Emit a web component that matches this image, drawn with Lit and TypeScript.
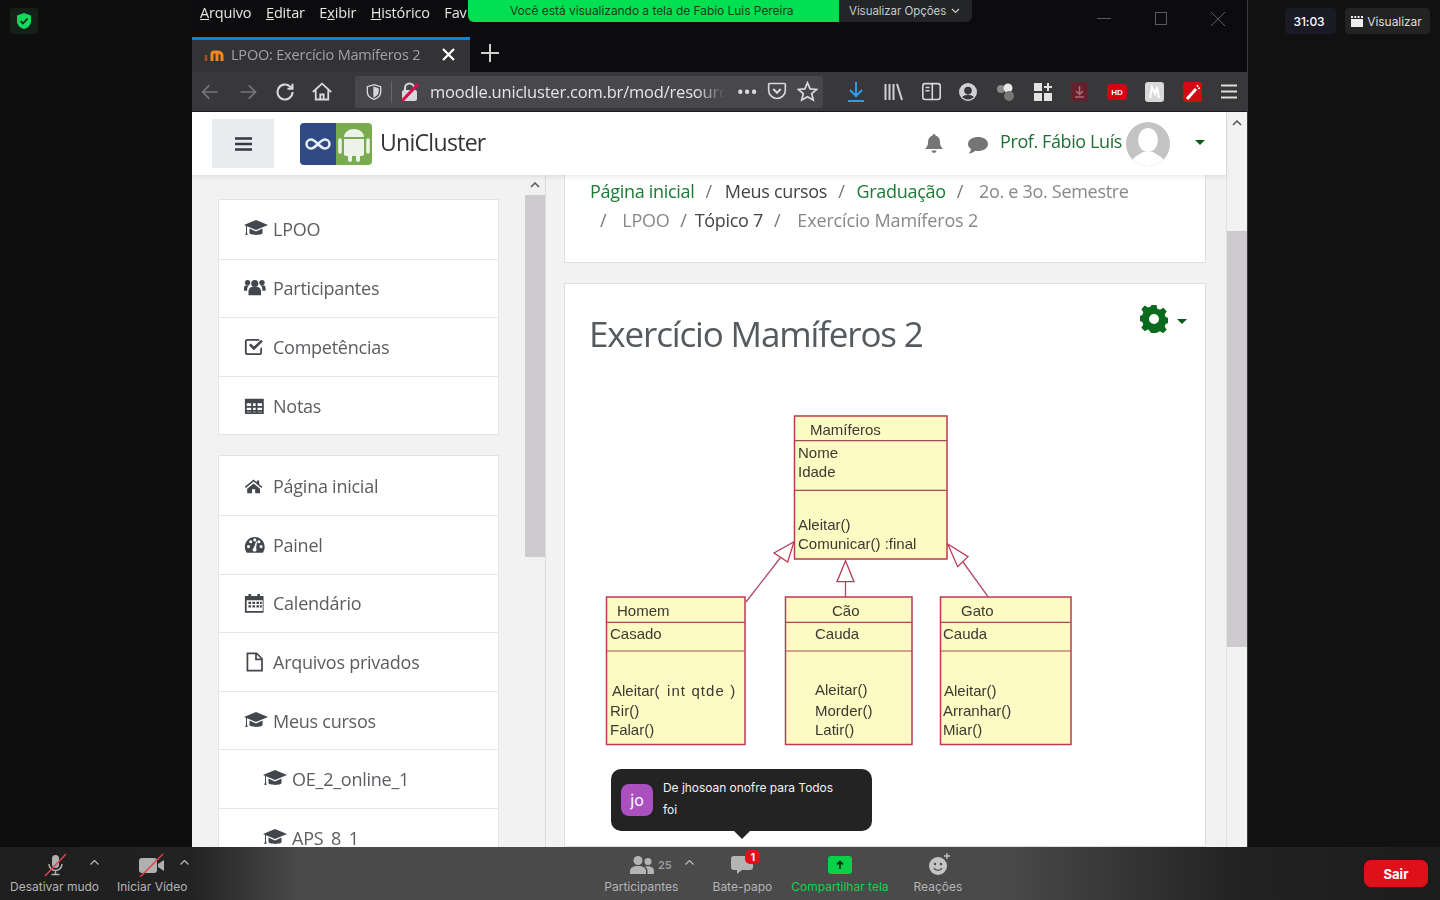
import { LitElement, html, css, svg } from "lit";
import { customElement } from "lit/decorators.js";

const cap = svg`<path d="M12 3 24 8 12 13 0 8Z"/><path d="M5.500 11.500 12 14.500l6.500-3V16c0 2.500-13 2.500-13 0Z"/><path d="M2 9h1v6l.6 3H1.400L2 15Z"/>`;
const users = svg`<circle cx="12" cy="7" r="4"/><circle cx="4" cy="6" r="3"/><circle cx="20" cy="6" r="3"/><path d="M5 20v-4c0-3 2-5 4-5h6c2 0 4 2 4 5v4Z"/><path d="M0 15v-3c0-2 1-3 3-3h3c-2 1-2.500 3-2.500 6ZM24 15v-3c0-2-1-3-3-3h-3c2 1 2.500 3 2.500 6Z"/>`;
const check = svg`<path fill-rule="evenodd" d="M4 3h13v2H4a1 1 0 0 0-1 1v12a1 1 0 0 0 1 1h13a1 1 0 0 0 1-1v-4l2-2v6a3 3 0 0 1-3 3H4a3 3 0 0 1-3-3V6a3 3 0 0 1 3-3Z"/><path d="m5.500 10 2-2 3.500 3.500L19 4l2 2-10 9.500Z"/>`;
const table = svg`<path fill-rule="evenodd" d="M1 4h21v17H1Zm2 5v3h5V9Zm7 0v3h3V9Zm5 0v3h5V9ZM3 14v2.500h5V14Zm7 0v2.500h3V14Zm5 0v2.500h5V14ZM3 18.500V19h5v-.5Zm7 0V19h3v-.5Zm5 0V19h5v-.5Z"/>`;
const home = svg`<path d="M12 4 1 13l1.200 1.500L12 6.500l9.800 8L23 13l-4-3.300V5h-3v2.200Z"/><path d="M4 15.500 12 9l8 6.500V21h-6v-5h-4v5H4Z"/>`;
const gauge = svg`<path fill-rule="evenodd" d="M12 3C5.500 3 1 8 1 14c0 2.500.7 4.800 2 6.500h18c1.300-1.700 2-4 2-6.500 0-6-4.500-11-11-11ZM5 15.500a1.700 1.700 0 1 1 0-3.400 1.700 1.700 0 0 1 0 3.400Zm2.500-5.500a1.700 1.700 0 1 1 0-3.400 1.700 1.700 0 0 1 0 3.400ZM12 8a1.700 1.700 0 1 1 0-3.400A1.700 1.700 0 0 1 12 8Zm2 9a2.200 2.200 0 1 1-3.200-1.800L13.500 8l1 .3-1 7Zm5-1.500a1.700 1.700 0 1 1 0-3.400 1.700 1.700 0 0 1 0 3.400Zm-2.500-5.500a1.700 1.700 0 1 1 0-3.400 1.700 1.700 0 0 1 0 3.400Z"/>`;
const cal = svg`<path fill-rule="evenodd" d="M5 2h3v2h7V2h3v2h4v19H1V4h4ZM3 9v12h18V9Zm2 1.500h3v2.500H5Zm4.500 0h3v2.500h-3Zm4.500 0h3v2.500h-3Zm4 0h2v2.500h-2ZM5 14.500h3V17H5Zm4.500 0h3V17h-3Zm4.500 0h3V17h-3Zm4 0h2V17h-2Z"/>`;
const file = svg`<path fill-rule="evenodd" d="M3 1h12l7 7v15H3Zm2 2v18h15V10h-7V3Zm10 .500V8h4.500Z"/>`;

const nav1: [unknown, string, number][] = [[cap, "LPOO", 24], [users, "Participantes", 26.7], [check, "Competências", 26.7], [table, "Notas", 26.7]];
const nav2: [unknown, string, number, boolean?][] = [
  [home, "Página inicial", 30], [gauge, "Painel", 26.7], [cal, "Calendário", 27], [file, "Arquivos privados", 28],
  [cap, "Meus cursos", 24], [cap, "OE_2_online_1", 24, true], [cap, "APS_8_1", 24, true],
];

const uk = (s: string) => html`<u>${s}</u>`;

@customElement("app-root")
export class AppRoot extends LitElement {
  static styles = css`
    :host { display: block; width: 1440px; height: 900px; overflow: hidden; background: #0e0e0e; position: relative; font-family: "Open Sans", sans-serif; color: #444; }
    svg { display: block; flex: none; }
    .stage { display: flex; height: 847px; }
    .side-l { width: 192px; flex: none; background: #0e0e0e; padding: 8px 0 0 10px; box-sizing: border-box; }
    .shield-box { width: 28px; height: 26px; background: #172018; border-radius: 4px; display: flex; align-items: center; justify-content: center; }
    .side-r { flex: 1; background: #111; display: flex; justify-content: flex-end; gap: 9px; padding: 8px 10px 0 0; font-family: "Inter", sans-serif; color: #fff; font-size: 12px; letter-spacing: -.05px; }
    .chip { height: 26px; border-radius: 4px; display: flex; align-items: center; justify-content: center; box-sizing: border-box; }
    .timer { width: 51px; background: #1a1a27; font-weight: 500; padding-right: 3px; }
    .view { width: 85px; background: #232323; gap: 4px; color: #ddd; padding-right: 2px; }

    .browser { width: 1056px; flex: none; display: flex; flex-direction: column; border-right: 1px solid #3a3a3a; box-sizing: border-box; height: 847px; overflow: hidden; filter: blur(.35px); }
    .titlebar { height: 37px; background: #0c0b0e; display: flex; align-items: flex-start; padding: 3px 22px 0 8px; box-sizing: border-box; color: #e6e6e6; font-size: 14.500px; letter-spacing: -.15px; }
    .menu { display: flex; gap: 14.500px; width: 268px; overflow: hidden; white-space: nowrap; line-height: 20px; flex: none; }
    .winbtns { margin-left: auto; display: flex; gap: 43px; color: #5a5a5e; padding-top: 9px; }
    .tabs { height: 35px; background: #0c0b0e; display: flex; align-items: stretch; }
    .tab { width: 278px; background: #333336; border-top: 3px solid #0a84d8; box-sizing: border-box; display: flex; align-items: center; padding: 0 15px 4px 12px; color: #a2a2a4; font-size: 14.500px; white-space: nowrap; letter-spacing: -.2px; }
    .tab span { margin-left: 7px; flex: 1; }
    .newtab { margin: -4px 0 0 11px; align-self: center; }
    .navbar { height: 40px; background: #38383b; display: flex; align-items: center; border-bottom: 1px solid #1c1c1e; box-sizing: border-box; padding-left: 9px; color: #d8d8da; }
    .nv { display: flex; gap: 17px; align-items: center; }
    .urlbar { margin-left: 23px; width: 468px; height: 32px; background: #48484c; border-radius: 3px; display: flex; align-items: center; padding: 0 5px 0 11px; box-sizing: border-box; flex: none; }
    .sep { width: 1px; height: 22px; background: #66666a; margin: 0 9px; }
    .url { margin-left: 11px; width: 297px; overflow: hidden; white-space: nowrap; color: #e4e4e6; font-size: 16.500px; letter-spacing: -.2px; -webkit-mask-image: linear-gradient(90deg,#000 90%,transparent); mask-image: linear-gradient(90deg,#000 90%,transparent); }
    .dots { margin-left: 11px; font-size: 15px; letter-spacing: 1.200px; font-weight: 700; line-height: 1; }
    .urlicons { display: flex; gap: 10px; margin-left: 9px; }
    .tools { display: flex; align-items: center; gap: 18.800px; margin-left: 24px; }

    .page { flex: 1; display: flex; min-height: 0; }
    .pagemain { flex: 1; min-width: 0; display: flex; flex-direction: column; position: relative; background: #f2f2f2; }
    .pagebar { width: 21px; flex: none; background: #f2f2f3; display: flex; flex-direction: column; align-items: center; border-left: 1px solid #e2e2e2; box-sizing: border-box; }
    .up { height: 20px; display: flex; align-items: center; justify-content: center; flex: none; width: 100%; }
    .pagebar .up { height: 22px; }
    .thumb { background: #cdcbce; width: 100%; }
    .pt { height: 97px; flex: none; }
    .pth { height: 416px; flex: none; }

    header { height: 63px; flex: none; background: #fff; display: flex; align-items: center; padding: 0 21px 0 20px; box-shadow: 0 2px 4px rgba(0,0,0,.08); position: relative; z-index: 1; }
    .burger { width: 62px; height: 49px; background: #e9ecef; display: flex; align-items: center; justify-content: center; flex: none; }
    .logo { margin-left: 26px; flex: none; }
    .brand { margin: -4px 0 0 8px; font-size: 23px; letter-spacing: -.7px; color: #333; }
    .hright { margin-left: auto; display: flex; align-items: center; color: #757575; }
    .uname { font-size: 18px; letter-spacing: -.4px; color: #1f6f35; margin: -5px 0 0 12px; }
    .avatar { margin-left: 4px; }
    .caret { width: 0; height: 0; border: 5px solid transparent; border-top-color: #0b5c18; border-bottom: 0; }
    .hright .caret { margin-left: 25px; margin-top: -3px; }
    .bell { margin-top: -1px; }
    .bubble { margin: 2px 0 0 24px; }

    .columns { flex: 1; display: flex; min-height: 0; }
    .sidebar { width: 354px; flex: none; display: flex; border-right: 1px solid #dcdcdc; box-sizing: border-box; }
    .navcol { flex: 1; padding: 24px 26px 0; display: flex; flex-direction: column; gap: 20px; overflow: hidden; }
    .sbar { width: 20px; flex: none; background: #f1f1f2; display: flex; flex-direction: column; }
    .sthumb { height: 362px; flex: none; background: #cdcbce; }
    .navcard { background: #fff; border: 1px solid #e4e4e4; flex: none; }
    .row { height: 58.600px; box-sizing: border-box; display: flex; align-items: center; padding-left: 25px; font-size: 18px; letter-spacing: -.25px; color: #5b5d60; border-top: 1px solid #e6e6e6; gap: 5px; }
    .row:first-child { border-top: 0; }
    .row.sub { padding-left: 44px; }
    .row svg { color: #43464c; }

    .content { flex: 1; padding: 0 20px 0 18px; display: flex; flex-direction: column; gap: 20px; overflow: hidden; min-width: 0; }
    .crumbcard { background: #fff; border: 1px solid #dfdfdf; border-top: 0; height: 88px; box-sizing: border-box; flex: none; padding: 2px 0 0 25px; }
    .crumbs { display: flex; flex-wrap: wrap; font-size: 18px; letter-spacing: -.3px; line-height: 29px; color: #888; width: 560px; }
    .crumbs b { font-weight: 400; color: #1b7a33; }
    .crumbs i { font-style: normal; color: #444; }
    .crumbs s { text-decoration: none; margin: 0 11px; color: #777; }
    .crumbs .lead { margin-left: 10px; }
    .crumbs .m1 { margin-left: 1px; }
    .crumbs .m2 { margin-left: 2px; }
    .crumbs .m5 { margin-left: 5px; }
    .crumbs .wide { margin-left: 6px; letter-spacing: -.15px; }
    .crumbs .lp { margin-left: 5px; }
    .crumbs .tp { margin-left: -3px; }
    .card { background: #fff; border: 1px solid #dfdfdf; flex: 1; box-sizing: border-box; padding: 0 18px 0 25px; }
    .cardhead { display: flex; align-items: flex-start; height: 126px; }
    h1 { font-weight: 400; font-size: 35px; letter-spacing: -1.150px; line-height: 48px; margin: 26px 0 0 -1px; color: #555a5e; flex: 1; }
    .gear { display: flex; align-items: center; gap: 9px; margin: 21px 0 0; color: #0a6b1e; }
    .gear .caret { margin-top: 5px; }
    .uml { margin-left: 10px; }
    .uml text { font-family: "Liberation Sans", sans-serif; font-size: 15px; fill: #3a3a32; }
    .uml .wide { letter-spacing: 1.100px; }

    .toolbar { height: 53px; display: flex; background: linear-gradient(90deg,#1e1e1e 0,#222 190px,#4a4a4a 300px,#4a4a4a 1000px,#222 1240px,#1c1c1c 100%); font-family: "Inter", sans-serif; font-size: 12px; color: #b4b4b4; padding: 0 12px 0 10px; align-items: stretch; white-space: nowrap; }
    .tbgroup { display: flex; }
    .tbitem { display: flex; flex-direction: column; align-items: center; position: relative; padding-top: 4px; box-sizing: border-box; }
    .tbicon { height: 28px; display: flex; align-items: center; justify-content: center; gap: 4px; color: #b9b9b9; }
    .count { font-size: 11px; font-weight: 600; color: #9e9e9e; }
    .arrow { position: absolute; top: 13px; color: #bbb; }
    .left { gap: 18px; }
    .center { margin-left: 417px; }
    .green { color: #12d24d; }
    .badge { position: absolute; top: 3px; left: 33px; width: 15px; height: 14px; background: #e3101a; border-radius: 5px; color: #fff; font-size: 10px; font-weight: 700; display: flex; align-items: center; justify-content: center; line-height: 1; }
    .share { width: 24px; height: 18px; background: #0ad04a; border-radius: 3px; display: flex; align-items: center; justify-content: center; color: #0b3d1a; }
    .sair { margin: 13px 0 13px auto; width: 64px; background: #e0101b; color: #fff; border-radius: 7px; font-weight: 700; font-size: 13px; display: flex; align-items: center; justify-content: center; }

    .banner { position: absolute; left: 468px; top: 0; width: 504px; height: 22px; display: flex; border-radius: 0 0 6px 6px; overflow: hidden; font-family: "Inter", sans-serif; font-size: 12px; line-height: 21px; z-index: 3; }
    .b1 { width: 371px; background: #00e050; color: #1e3a1e; padding-left: 42px; box-sizing: border-box; white-space: nowrap; letter-spacing: -.05px; }
    .b2 { flex: 1; background: #242526; color: #c9c9c9; padding-left: 10px; display: flex; align-items: center; gap: 5px; font-size: 11.500px; letter-spacing: -.05px; }

    .toast { position: absolute; left: 611px; top: 769px; width: 261px; height: 62px; background: #232323; border-radius: 10px; display: flex; align-items: center; padding-left: 10px; box-sizing: border-box; color: #f2f2f2; font-family: "Inter", sans-serif; font-size: 12px; z-index: 3; }
    .toast::after { content: ""; position: absolute; left: 123px; bottom: -8px; border: 8px solid transparent; border-top-color: #232323; border-bottom: 0; }
    .jo { width: 32px; height: 32px; background: #ab50bf; border-radius: 8px; color: #fff; font-size: 16px; display: flex; align-items: center; justify-content: center; flex: none; }
    .msg { margin: -2px 0 0 10px; line-height: 22px; letter-spacing: -.05px; }
  `;

  private row(icon: unknown, label: string, vb: number, sub = false) {
    return html`<div class="row ${sub ? "sub" : ""}"><svg width="24" height="24" viewBox="0 ${(24 - vb) / 2} ${vb} ${vb}" fill="currentColor">${icon}</svg><span>${label}</span></div>`;
  }

  private box(x: number, w: number, y: number, h: number, d1: number, d2: number) {
    return svg`<rect x=${x} y=${y} width=${w} height=${h} fill="#fdfac4" stroke="#bb3a55" stroke-width="1.500"/><path d="M${x} ${d1}H${x + w}M${x} ${d2}H${x + w}" stroke="#a84a55" stroke-width="1.200"/>`;
  }
  private t(x: number, y: number, s: string) { return svg`<text x=${x} y=${y}>${s}</text>`; }

  render() {
    const ic = (w: number, h: number, body: unknown, vb = "0 0 24 24") => html`<svg width=${w} height=${h} viewBox=${vb} fill="none" stroke="currentColor" stroke-width="2">${body}</svg>`;
    return html`
      <div class="stage">
        <div class="side-l"><div class="shield-box"><svg width="14" height="16" viewBox="0 0 14 16"><path d="M7 0 14 2.500V8c0 4-3 7-7 8-4-1-7-4-7-8V2.500Z" fill="#15d95c"/><path d="m3.500 8 2.500 2.500 4.500-5" fill="none" stroke="#0c2a16" stroke-width="1.800"/></svg></div></div>

        <div class="browser">
          <div class="titlebar">
            <div class="menu"><span>${uk("A")}rquivo</span><span>${uk("E")}ditar</span><span>E${uk("x")}ibir</span><span>${uk("H")}istórico</span><span>Fav</span></div>
            <div class="winbtns">
              <svg width="14" height="14" viewBox="0 0 14 14"><path d="M0 6.500h14" stroke="currentColor"/></svg>
              <svg width="14" height="14" viewBox="0 0 14 14"><rect x="1.500" y=".5" width="11" height="12" fill="none" stroke="currentColor"/></svg>
              <svg width="14" height="14" viewBox="0 0 14 14"><path d="M0 0l14 14M14 0 0 14" stroke="currentColor"/></svg>
            </div>
          </div>
          <div class="tabs">
            <div class="tab">
              <svg width="20" height="13" viewBox="0 0 20 13" fill="none"><path d="M2 13V7" stroke="#a0531c" stroke-width="2.500"/><path d="M8 13V6q0-2 2-2h3q5 0 5 4v5M13 5v8" stroke="#f08a1e" stroke-width="3"/></svg>
              <span>LPOO: Exercício Mamíferos 2</span>
              <svg width="13" height="13" viewBox="0 0 13 13"><path d="M1 1l11 11M12 1 1 12" stroke="#fff" stroke-width="2.200"/></svg>
            </div>
            <svg class="newtab" width="18" height="18" viewBox="0 0 18 18"><path d="M9 0v18M0 9h18" stroke="#d0d0d0" stroke-width="2"/></svg>
          </div>
          <div class="navbar">
            <div class="nv">
              ${ic(20, 20, svg`<path d="M20 12H3M10 4l-8 8 8 8" stroke="#77777b"/>`)}
              ${ic(20, 20, svg`<path d="M3 12h17M13 4l8 8-8 8" stroke="#77777b"/>`)}
              ${ic(20, 20, svg`<path d="M21 12a9 9 0 1 1-3-6.700L21 8M21 2v6h-6" stroke-width="2.500"/>`)}
              ${ic(20, 20, svg`<path d="M1 12 12 2l11 10M4.500 10v11h15V10M10 21v-6h4v6" stroke-width="2.200"/>`)}
            </div>
            <div class="urlbar">
              ${ic(16, 18, svg`<path d="M12 1 22 4v8c0 5-4 9-10 11C6 21 2 17 2 12V4Z"/><path d="M12 5 18 7v5c0 3-2 5-6 7Z" fill="currentColor"/>`)}
              <div class="sep"></div>
              <svg width="18" height="20" viewBox="0 0 18 20"><rect x="1" y="8" width="15" height="11" rx="2" fill="#d8d8da"/><path d="M4 8V6a4.500 4.500 0 0 1 9 0v2" fill="none" stroke="#d8d8da" stroke-width="2"/><path d="M1 19 17 2" stroke="#d70f4c" stroke-width="3"/></svg>
              <div class="url">moodle.unicluster.com.br/mod/resourc</div>
              <div class="dots">•••</div>
              <div class="urlicons">
                ${ic(20, 20, svg`<path d="M3 3h18a1 1 0 0 1 1 1v7c0 6-5 10-10 10S2 17 2 11V4a1 1 0 0 1 1-1Z"/><path d="m7.500 9.500 4.500 4.500 4.500-4.500" stroke-width="2.500"/>`)}
                ${ic(21, 21, svg`<path d="m12 2 3 7 7.500.6-5.700 4.900 1.800 7.300L12 18l-6.600 3.800 1.800-7.300L1.500 9.600 9 9Z"/>`)}
              </div>
            </div>
            <div class="tools">
              <svg width="18" height="22" viewBox="0 0 18 22" fill="none" stroke="#2f9be6" stroke-width="2"><path d="M9 1v14M3 9l6 6 6-6M1 20h16"/></svg>
              <svg width="19" height="18" viewBox="0 0 19 18" fill="none" stroke="#d0d0d2" stroke-width="2"><path d="M1.500 1v16M5.500 1v16M9.500 1v16M13 1l5 16"/></svg>
              ${ic(19, 19, svg`<rect x="1" y="2" width="22" height="20" rx="3"/><path d="M13 2v20M4.500 7h5M4.500 11h5" />`)}
              <svg width="18" height="18" viewBox="0 0 18 18"><circle cx="9" cy="9" r="9" fill="#d0d0d2"/><circle cx="9" cy="7.500" r="3.800" fill="#38383b"/><path d="M3 14q6-5 12 0-6 5-12 0Z" fill="#38383b"/></svg>
              <svg width="19" height="20" viewBox="0 0 19 20"><circle cx="5" cy="7" r="4" fill="#8a8a8a"/><circle cx="12" cy="6" r="4.500" fill="#e8e8e8"/><circle cx="13" cy="14" r="5" fill="#777"/></svg>
              <svg width="18" height="18" viewBox="0 0 18 18" fill="#e2e2e2"><path d="M0 0h8v8H0zM0 10h8v8H0zM10 10h8v8h-8zM13 0h2v3h3v2h-3v3h-2V5h-3V3h3z"/></svg>
              <svg width="17" height="19" viewBox="0 0 17 19"><rect width="17" height="19" rx="2" fill="#64202e"/><path d="M8.500 4v8M5 9l3.500 3.500L12 9M4 15h9" stroke="#b06a70" stroke-width="1.500" fill="none"/></svg>
              <svg width="20" height="16" viewBox="0 0 20 16"><rect width="20" height="16" rx="4" fill="#d40510"/><text x="10" y="11" text-anchor="middle" font-family="Liberation Sans" font-size="8" font-weight="700" fill="#fff">HD</text></svg>
              <svg width="19" height="20" viewBox="0 0 19 20"><rect width="19" height="20" rx="3" fill="#d8d8d8"/><path d="M5 16 7 5l3 7 2-7 2 11" stroke="#fff" stroke-width="2" fill="none"/></svg>
              <svg width="19" height="20" viewBox="0 0 19 20"><rect width="19" height="20" rx="2" fill="#d20a12"/><path d="M4 17 13 7" stroke="#fff" stroke-width="3"/><path d="M14 3l1 2M17 6l-2 .5" stroke="#fff" stroke-width="1.500"/></svg>
              <svg width="16" height="15" viewBox="0 0 16 15"><path d="M0 1.500h16M0 7.500h16M0 13.500h16" stroke="#dcdcdc" stroke-width="2"/></svg>
            </div>
          </div>

          <div class="page">
            <div class="pagemain">
              <header>
                <div class="burger"><svg width="17" height="14" viewBox="0 0 17 14"><path d="M0 1.500h17M0 7h17M0 12.500h17" stroke="#333a42" stroke-width="2.600"/></svg></div>
                <svg class="logo" width="72" height="42" viewBox="0 0 72 42">
                  <path d="M4 0h32v42H4a4 4 0 0 1-4-4V4a4 4 0 0 1 4-4Z" fill="#2f4a85"/>
                  <path d="M36 0h32a4 4 0 0 1 4 4v34a4 4 0 0 1-4 4H36Z" fill="#79ab4f"/>
                  <path d="M18 21c-3-3-4.500-4.500-7-4.500a4.500 4.500 0 0 0 0 9c2.500 0 4-1.500 7-4.500 3-3 4.500-4.500 7-4.500a4.500 4.500 0 0 1 0 9c-2.500 0-4-1.500-7-4.500Z" fill="none" stroke="#e8eef5" stroke-width="2.500"/>
                  <path d="M44 14a10 8 0 0 1 20 0ZM44 16h20v15a2 2 0 0 1-2 2h-2v4a2 2 0 0 1-4 0v-4h-4v4a2 2 0 0 1-4 0v-4h-2a2 2 0 0 1-2-2Z" fill="#eef3ea"/>
                  <path d="M40 17v12M68 17v12" stroke="#eef3ea" stroke-width="3.500" stroke-linecap="round"/>
                </svg>
                <div class="brand">UniCluster</div>
                <div class="hright">
                  <svg class="bell" width="18" height="20" viewBox="0 0 18 20" fill="currentColor"><path d="M9 1a1.500 1.500 0 0 1 1.500 1.500C13.500 3.500 15 6 15 9c0 3.500 1 5 3 7H0c2-2 3-3.500 3-7 0-3 1.500-5.500 4.500-6.500A1.500 1.500 0 0 1 9 1ZM6.500 17.500h5a2.500 2.500 0 0 1-5 0Z"/></svg>
                  <svg class="bubble" width="21" height="18" viewBox="0 0 21 18" fill="currentColor"><path d="M11 1c5 0 10 2.500 10 7s-5 7-10 7c-1 0-2 0-3-.300C6.500 16.500 4 17.500 1.500 17.500c1.500-1.500 2.500-3 2.500-4.500C2 11.800 1 10 1 8c0-4.500 5-7 10-7Z"/></svg>
                  <span class="uname">Prof. Fábio Luís</span>
                  <svg class="avatar" width="44" height="44" viewBox="0 0 44 44"><defs><clipPath id="av"><circle cx="22" cy="22" r="22"/></clipPath></defs><circle cx="22" cy="22" r="22" fill="#c4c4c4"/><g clip-path="url(#av)"><ellipse cx="22" cy="18" rx="10" ry="12" fill="#fff"/><path d="M4 44c1-9 9-11 13-14h10c4 3 12 5 13 14Z" fill="#fff"/></g></svg>
                  <div class="caret"></div>
                </div>
              </header>
              <div class="columns">
                <div class="sidebar">
                  <div class="navcol">
                    <div class="navcard">${nav1.map(([i, l, v]) => this.row(i, l, v))}</div>
                    <div class="navcard">${nav2.map(([i, l, v, s]) => this.row(i, l, v, s))}</div>
                  </div>
                  <div class="sbar">
                    <div class="up"><svg width="10" height="6" viewBox="0 0 10 6"><path d="M1 5l4-4 4 4" fill="none" stroke="#555" stroke-width="1.500"/></svg></div>
                    <div class="sthumb"></div>
                  </div>
                </div>
                <div class="content">
                  <div class="crumbcard">
                    <div class="crumbs">
                      <b>Página inicial</b><s>/</s><i class="m2">Meus cursos</i><s>/</s><b class="m1">Graduação</b><s>/</s><span class="m5">2o. e 3o. Semestre</span>
                      <s class="lead">/</s><span class="lp">LPOO</span><s>/</s><i class="tp">Tópico 7</i><s>/</s><span class="wide">Exercício Mamíferos 2</span>
                    </div>
                  </div>
                  <div class="card">
                    <div class="cardhead">
                      <h1>Exercício Mamíferos 2</h1>
                      <div class="gear">
                        <svg width="28" height="28" viewBox="0 0 28 28"><path fill="currentColor" fill-rule="evenodd" d="M11.500 0h5l.8 3.700 2.700 1.100 3.200-2 3.500 3.500-2 3.200 1.100 2.700 3.700.8v5l-3.700.8-1.100 2.700 2 3.200-3.500 3.500-3.200-2-2.700 1.100-.8 3.700h-5l-.8-3.700L8 24.200l-3.200 2-3.500-3.500 2-3.200-1.100-2.700-3.700-.8v-5l3.700-.8L3.300 7.300l-2-3.200 3.500-3.500L8 2.600l2.700-1.100ZM14 9a5 5 0 1 0 0 10 5 5 0 0 0 0-10Z"/></svg>
                        <div class="caret"></div>
                      </div>
                    </div>
                    <svg class="uml" width="480" height="345" viewBox="600 410 480 345">
                      <g fill="none" stroke="#a84a66" stroke-width="1.300">
                        <path d="M781 557 746 602M845.500 581.700V597M963 562 988 596.700"/>
                        <path d="M794 541.700 774 553 787.700 562ZM845.500 560.700 837 581.700H854ZM947.700 544 968 556.700 957.700 566.700Z" stroke="#bb3a55" fill="#fff"/>
                      </g>
                      ${this.box(794.5, 152.5, 416, 143, 440.7, 490.3)}
                      ${this.box(606.5, 138.5, 597, 147.5, 622.3, 651)}
                      ${this.box(785.5, 126.5, 597, 147.5, 622.3, 651)}
                      ${this.box(940.5, 130.5, 597, 147.5, 622.3, 651)}
                      ${this.t(810, 435, "Mamíferos")}${this.t(798, 458, "Nome")}${this.t(798, 477, "Idade")}${this.t(798, 530, "Aleitar()")}${this.t(798, 549, "Comunicar() :final")}
                      ${this.t(617, 616, "Homem")}${this.t(610, 639, "Casado")}${this.t(612, 696, "Aleitar(")}<text class="wide" x="667" y="696">int qtde )</text>${this.t(610, 716, "Rir()")}${this.t(610, 735, "Falar()")}
                      ${this.t(832, 616, "Cão")}${this.t(815, 639, "Cauda")}${this.t(815, 695, "Aleitar()")}${this.t(815, 716, "Morder()")}${this.t(815, 735, "Latir()")}
                      ${this.t(961, 616, "Gato")}${this.t(943, 639, "Cauda")}${this.t(944, 696, "Aleitar()")}${this.t(943, 716, "Arranhar()")}${this.t(943, 735, "Miar()")}
                    </svg>
                  </div>
                </div>
              </div>
            </div>
            <div class="pagebar">
              <div class="up"><svg width="10" height="6" viewBox="0 0 10 6"><path d="M1 5l4-4 4 4" fill="none" stroke="#555" stroke-width="1.500"/></svg></div>
              <div class="pt"></div>
              <div class="thumb pth"></div>
            </div>
          </div>
        </div>

        <div class="side-r">
          <div class="chip timer">31:03</div>
          <div class="chip view"><svg width="12" height="11" viewBox="0 0 12 11" fill="#eee"><path d="M0 3h12v8H0zM0 0h2v2H0zM3.300 0h2v2h-2zM6.600 0h2v2h-2zM10 0h2v2h-2z"/></svg>Visualizar</div>
        </div>
      </div>

      <div class="toolbar">
        <div class="tbgroup left">
          <div class="tbitem">
            <div class="tbicon"><svg width="24" height="24" viewBox="0 0 24 24"><rect x="9" y="2" width="7" height="13" rx="3.500" fill="#b0b0b0"/><path d="M6 11a6.500 6.500 0 0 0 13 0M12.500 18v3M8.500 21.500h8" fill="none" stroke="#b0b0b0" stroke-width="1.500"/><path d="M2 23 23 1" stroke="#e0424a" stroke-width="1.500"/></svg></div>
            <span>Desativar mudo</span>
            <svg class="arrow" style="left:80px" width="9" height="5" viewBox="0 0 9 5"><path d="M.5 4.500l4-4 4 4" fill="none" stroke="currentColor" stroke-width="1.200"/></svg>
          </div>
          <div class="tbitem">
            <div class="tbicon"><svg width="26" height="24" viewBox="0 0 26 24"><rect x="0" y="5" width="18" height="15" rx="3" fill="#b0b0b0"/><path d="M19 11l6-4v11l-6-4Z" fill="#b0b0b0"/><path d="M1 24 24 1" stroke="#e0424a" stroke-width="1.500"/></svg></div>
            <span>Iniciar Vídeo</span>
            <svg class="arrow" style="left:63px" width="9" height="5" viewBox="0 0 9 5"><path d="M.5 4.500l4-4 4 4" fill="none" stroke="currentColor" stroke-width="1.200"/></svg>
          </div>
        </div>
        <div class="tbgroup center">
          <div class="tbitem" style="width:74px">
            <div class="tbicon" style="margin-left:19px"><svg width="24" height="18" viewBox="0 0 24 18" fill="#b4b4b4"><circle cx="8" cy="4.500" r="4.500"/><circle cx="18" cy="5.500" r="3.500"/><path d="M0 18v-3c0-3 3-5 8-5s8 2 8 5v3Z"/><path d="M17.500 18v-3c0-2-1-3.500-2.500-4.500 5-1 9 1 9 4.500v3Z"/></svg><span class="count">25</span></div>
            <span>Participantes</span>
            <svg class="arrow" style="left:81px" width="9" height="5" viewBox="0 0 9 5"><path d="M.5 4.500l4-4 4 4" fill="none" stroke="currentColor" stroke-width="1.200"/></svg>
          </div>
          <div class="tbitem" style="width:60px;margin-left:34px">
            <div class="tbicon"><svg width="22" height="20" viewBox="0 0 22 20" fill="#b4b4b4"><path d="M3 1h16a3 3 0 0 1 3 3v8a3 3 0 0 1-3 3h-8l-5 4v-4H3a3 3 0 0 1-3-3V4a3 3 0 0 1 3-3Z"/></svg></div>
            <div class="badge">1</div>
            <span>Bate-papo</span>
          </div>
          <div class="tbitem green" style="width:97px;margin-left:19px">
            <div class="tbicon"><div class="share"><svg width="10" height="10" viewBox="0 0 10 10"><path d="M5 9V2M2 4.500 5 1.500l3 3" fill="none" stroke="currentColor" stroke-width="1.800"/></svg></div></div>
            <span>Compartilhar tela</span>
          </div>
          <div class="tbitem" style="width:49px;margin-left:25px">
            <div class="tbicon"><svg width="24" height="24" viewBox="0 0 24 24" style="margin-top:-3px"><circle cx="12" cy="14" r="9" fill="#c4c4c4"/><circle cx="9" cy="12" r="1.200" fill="#4a4a4a"/><circle cx="15" cy="12" r="1.200" fill="#4a4a4a"/><path d="M8 16a4.500 4.500 0 0 0 8 0" fill="none" stroke="#4a4a4a" stroke-width="1.300"/><path d="M21 1v6M18 4h6" stroke="#c4c4c4" stroke-width="1.300"/></svg></div>
            <span>Reações</span>
          </div>
        </div>
        <div class="sair">Sair</div>
      </div>

      <div class="banner">
        <div class="b1">Você está visualizando a tela de Fabio Luis Pereira</div>
        <div class="b2">Visualizar Opções <svg width="9" height="6" viewBox="0 0 9 6"><path d="m1 1 3.500 3.500L8 1" fill="none" stroke="currentColor" stroke-width="1.200"/></svg></div>
      </div>

      <div class="toast">
        <div class="jo">jo</div>
        <div class="msg"><div>De jhosoan onofre para Todos</div><div>foi</div></div>
      </div>
    `;
  }
}
